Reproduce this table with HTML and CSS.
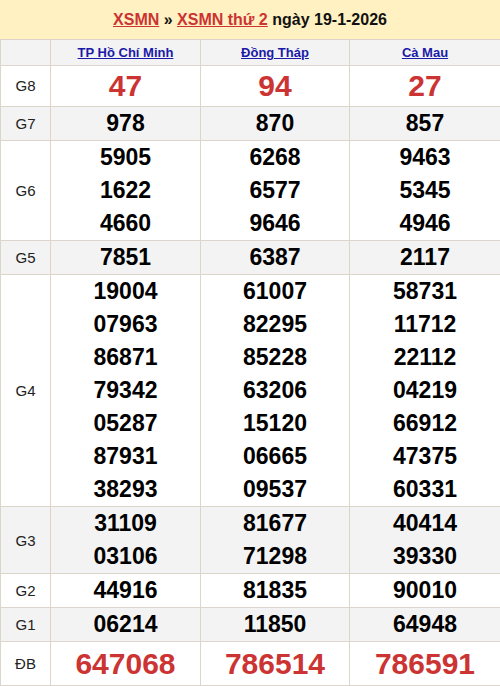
FILE: index.html
```html
<!DOCTYPE html>
<html lang="vi">
<head>
<meta charset="utf-8">
<title>XSMN thứ 2 ngày 19-1-2026</title>
<link rel="stylesheet" href="styles.css">
</head>
<body>
<div class="title"><a href="#">XSMN</a> » <a href="#">XSMN thứ 2</a> ngày 19-1-2026</div>
<table class="kq">
<colgroup><col class="c-label"><col class="c-a"><col class="c-b"><col class="c-c"></colgroup>
<thead>
<tr class="head"><th></th><th><a href="#">TP Hồ Chí Minh</a></th><th><a href="#">Đồng Tháp</a></th><th><a href="#">Cà Mau</a></th></tr>
</thead>
<tbody>
<tr class="big"><td class="lbl">G8</td><td>47</td><td>94</td><td>27</td></tr>
<tr class="alt"><td class="lbl">G7</td><td>978</td><td>870</td><td>857</td></tr>
<tr><td class="lbl">G6</td><td>5905<br>1622<br>4660</td><td>6268<br>6577<br>9646</td><td>9463<br>5345<br>4946</td></tr>
<tr class="alt"><td class="lbl">G5</td><td>7851</td><td>6387</td><td>2117</td></tr>
<tr><td class="lbl">G4</td><td>19004<br>07963<br>86871<br>79342<br>05287<br>87931<br>38293</td><td>61007<br>82295<br>85228<br>63206<br>15120<br>06665<br>09537</td><td>58731<br>11712<br>22112<br>04219<br>66912<br>47375<br>60331</td></tr>
<tr class="alt"><td class="lbl">G3</td><td>31109<br>03106</td><td>81677<br>71298</td><td>40414<br>39330</td></tr>
<tr><td class="lbl">G2</td><td>44916</td><td>81835</td><td>90010</td></tr>
<tr class="alt"><td class="lbl">G1</td><td>06214</td><td>11850</td><td>64948</td></tr>
<tr class="db"><td class="lbl">ĐB</td><td>647068</td><td>786514</td><td>786591</td></tr>
</tbody>
</table>
</body>
</html>
```
FILE: styles.css
```css
html, body {
  margin: 0;
  padding: 0;
  background: #fff;
}
body {
  font-family: "Liberation Sans", Arial, sans-serif;
  width: 500px;
}
.title {
  background: #fff1c1;
  height: 39px;
  line-height: 39px;
  text-align: center;
  font-size: 16px;
  font-weight: bold;
  color: #111;
}
.title a {
  color: #cc3333;
  text-decoration: underline;
}
.kq {
  width: 500px;
  border-collapse: collapse;
  table-layout: fixed;
}
.c-label { width: 50px; }
.c-a { width: 150px; }
.c-b { width: 149px; }
.c-c { width: 151px; }
.kq th, .kq td {
  border: 1px solid #ddd4cc;
  padding: 0;
  text-align: center;
  vertical-align: middle;
}
.kq td {
  font-size: 23px;
  font-weight: bold;
  line-height: 33px;
  color: #000;
}
.head th {
  background: #f3f3f3;
  font-size: 13px;
  line-height: 25px;
  font-weight: bold;
}
.head a {
  color: #1a1aa8;
  text-decoration: underline;
}
.alt td {
  background: #f3f3f3;
}
.kq td.lbl {
  font-size: 15px;
  font-weight: normal;
  color: #222;
}
.big td {
  font-size: 30px;
  line-height: 40px;
  color: #cc3333;
}
.db td {
  font-size: 30px;
  line-height: 43px;
  color: #cc3333;
}
```
